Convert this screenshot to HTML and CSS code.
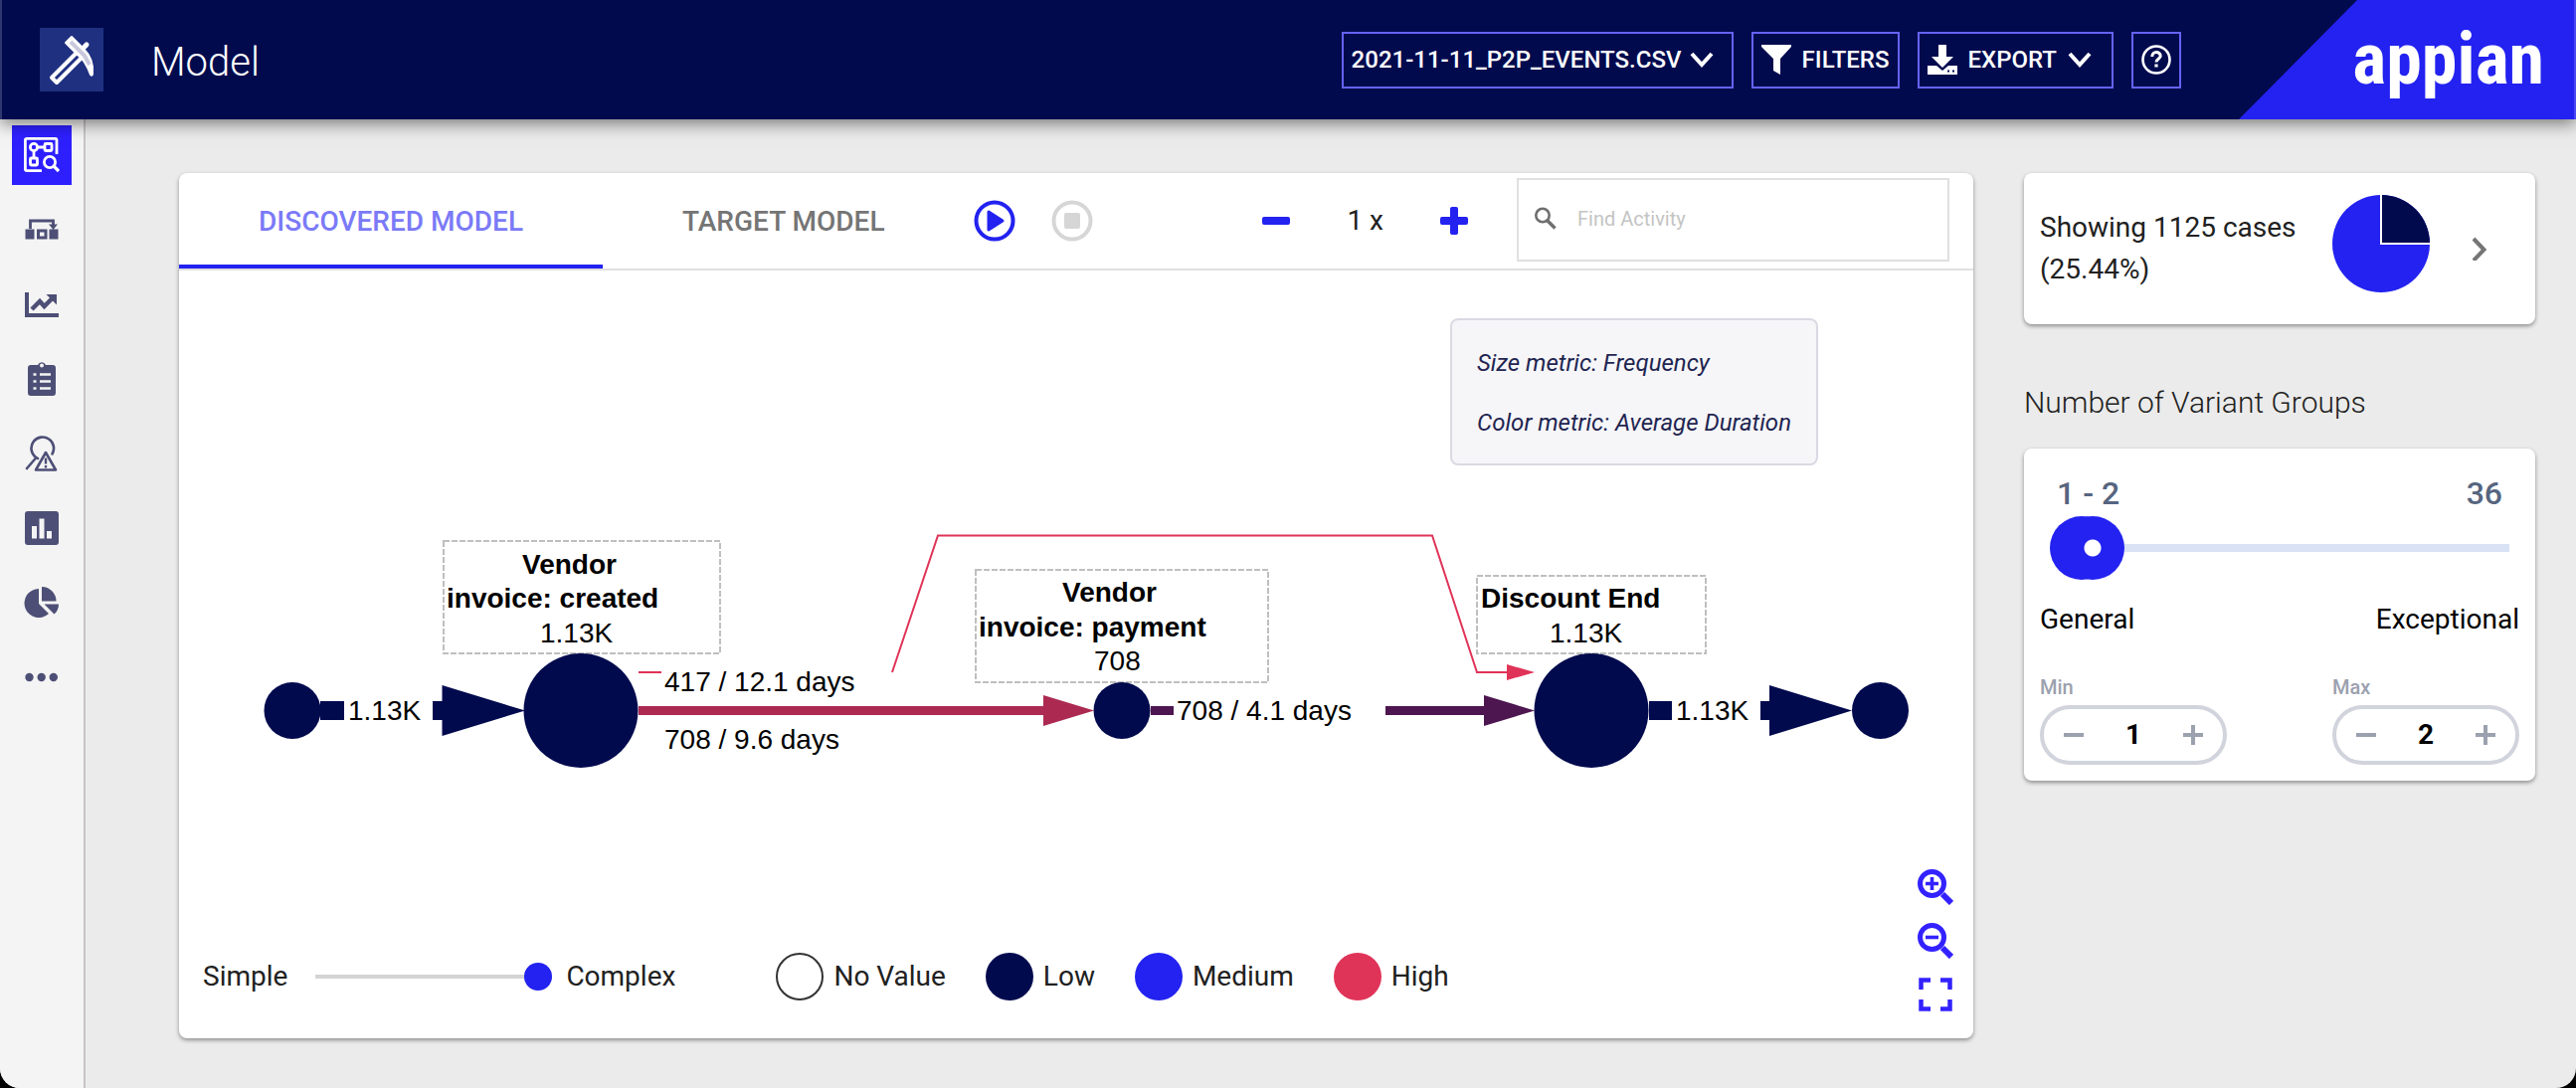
FILE: index.html
```html
<!DOCTYPE html>
<html lang="en">
<head>
<meta charset="utf-8">
<meta name="viewport" content="width=device-width, initial-scale=1">
<title>Model</title>
<link rel="stylesheet" href="styles.css">
</head>
<body>
<header class="topbar">
  <svg class="app-icon" viewBox="0 0 64 64" aria-hidden="true">
    <rect width="64" height="64" fill="#1f3080"/>
    <path d="M38 24L12 50l5 5 26-26z" fill="#1f3080" stroke="#fff" stroke-width="4" stroke-linejoin="round"/>
    <path d="M42 22l5-5" stroke="#fff" stroke-width="5" stroke-linecap="round"/>
    <path d="M32 9l-6 6 13 13c6 4 9 11 12 19 1 1 2 1 2-1 1-11-2-18-9-25z" fill="#fff" stroke="#fff" stroke-width="2" stroke-linejoin="round"/>
    <path d="M31 14l14 14 5 9" fill="none" stroke="#c9c8dc" stroke-width="4"/>
  </svg>
  <h1 class="page-title">Model</h1>
  <div class="actions">
    <div class="picker">
      <select class="picker-select outlined" aria-label="Dataset"><option>2021-11-11_P2P_EVENTS.CSV</option></select>
      <svg class="chevron" viewBox="0 0 24 24"><path d="M2 6l10 11L22 6" fill="none" stroke="#fff" stroke-width="4"/></svg>
    </div>
    <button class="outlined" type="button">
      <svg class="icon-30" viewBox="0 0 30 30"><path d="M0 0h30v2L19 14v16l-7-4V14L0 2z" fill="#fff"/></svg>
      FILTERS
    </button>
    <button class="outlined export" type="button">
      <svg class="icon-30" viewBox="0 0 30 30"><path d="M11 0h8v12h7L15 23 4 12h7z" fill="#fff"/><path fill-rule="evenodd" d="M0 21h9l6 5 6-5h9v9H0zM20 25.500v2h2v-2zM25 25.500v2h2v-2z" fill="#fff"/></svg>
      EXPORT
      <svg class="chevron" viewBox="0 0 24 24"><path d="M2 6l10 11L22 6" fill="none" stroke="#fff" stroke-width="4"/></svg>
    </button>
    <button class="outlined help" type="button" aria-label="Help">
      <svg class="icon-30" viewBox="0 0 30 30" fill="none" stroke="#fff"><circle cx="15" cy="15" r="13.500" stroke-width="2.600"/><path d="M10.800 12c0-6 8.400-5.500 8.400-.7 0 3-4.200 3-4.200 6.200" stroke-width="3"/><path d="M15 19.500v3" stroke-width="3.200"/></svg>
    </button>
  </div>
  <div class="brand"><span class="brand-name">appian</span></div>
</header>

<div class="shell">
  <nav class="rail" aria-label="Sections">
    <a class="rail-link active" href="#model" aria-label="Model">
      <svg viewBox="0 0 36 36" fill="none" stroke="#fff" stroke-width="2.800"><path d="M33 17V2.500Q33 1.400 32 1.400H3Q1.400 1.400 1.400 3v29q0 1.600 1.600 1.600h15"/><circle cx="10" cy="10" r="3.600"/><rect x="21" y="6.500" width="7" height="7" rx="1"/><rect x="6.500" y="21" width="7" height="7" rx="1"/><path d="M14 10h7M10 14v7"/><circle cx="26" cy="25" r="5.600"/><path d="M30 29l5 5" stroke-width="3.200"/></svg>
    </a>
    <a class="rail-link" href="#flow" aria-label="Flow">
      <svg viewBox="0 0 36 36"><path d="M6.500 17V9h23v5" fill="none" stroke="#4d4f76" stroke-width="2.800"/><path d="M25 12.500h9L29.500 18zM1.500 17.500h9v10H1.500zM25.500 17.500h9v10h-9z"/><path d="M14.500 19h7.500v7h-7.500z" fill="none" stroke="#4d4f76" stroke-width="3"/></svg>
    </a>
    <a class="rail-link" href="#trends" aria-label="Trends">
      <svg viewBox="0 0 36 36" fill="none" stroke="#4d4f76"><path d="M3 6v23h32" stroke-width="4"/><path d="M8 23l8-8 4.500 5 9-9" stroke-width="4.500"/><path d="M22.500 8H33v10.500z" fill="#4d4f76" stroke="none"/></svg>
    </a>
    <a class="rail-link" href="#tasks" aria-label="Tasks">
      <svg viewBox="0 0 36 36"><path fill-rule="evenodd" d="M7 4h7a4.300 4.300 0 0 1 8 0h7q3 0 3 3v25q0 3-3 3H7q-3 0-3-3V7q0-3 3-3zM18 2.500a2 2 0 1 0 0 4 2 2 0 0 0 0-4z"/><path d="M16 13.500h11M16 20.500h11M16 27.500h11M9.500 13.500h3M9.500 20.500h3M9.500 27.500h3" stroke="#f4f4f4" stroke-width="2.600"/></svg>
    </a>
    <a class="rail-link" href="#issues" aria-label="Root causes">
      <svg viewBox="0 0 36 36" fill="none" stroke="#4d4f76" stroke-width="2.600" stroke-linejoin="round"><path d="M28.500 18.500A11.300 11.300 0 1 0 11 21l3 2M12.500 22L3 33" stroke-linecap="round"/><path d="M22 17L12 34.500h20z"/><path d="M22 22.500v6M22 30v2.500" stroke-width="2.400"/></svg>
    </a>
    <a class="rail-link" href="#charts" aria-label="Charts">
      <svg viewBox="0 0 36 36"><path fill-rule="evenodd" d="M4 1h28q3 0 3 3v28q0 3-3 3H4q-3 0-3-3V4q0-3 3-3zM8 16v12.500h5V16zM15.500 8.500v20h5v-20zM23 21v7.500h5V21z"/></svg>
    </a>
    <a class="rail-link" href="#breakdown" aria-label="Breakdown">
      <svg viewBox="0 0 36 36"><path d="M15 4v15l10 10A14.500 14.500 0 1 1 15 4zM18 2a14.500 14.500 0 0 1 14.500 14.500H18zM20.500 19.500H35c0 4-1.500 7.500-4.500 10z"/></svg>
    </a>
    <a class="rail-link" href="#more" aria-label="More">
      <svg viewBox="0 0 36 36"><circle cx="5.500" cy="18" r="4.200"/><circle cx="17.700" cy="18" r="4.200"/><circle cx="29.800" cy="18" r="4.200"/></svg>
    </a>
  </nav>

  <main class="content">
    <section class="card model" aria-label="Process model">
      <div class="toolbar">
        <div class="tabs" role="tablist">
          <button class="tab selected" type="button" role="tab" aria-selected="true">DISCOVERED MODEL</button>
          <button class="tab" type="button" role="tab" aria-selected="false">TARGET MODEL</button>
        </div>
        <div class="playback">
          <button class="plain" type="button" aria-label="Play"><svg class="icon-42" viewBox="0 0 42 42"><circle cx="21" cy="21" r="18.500" fill="none" stroke="#2322f0" stroke-width="4"/><path d="M15 12l14 9-14 9z" fill="#2322f0" stroke="#2322f0" stroke-width="3" stroke-linejoin="round"/></svg></button>
          <button class="plain" type="button" aria-label="Stop" disabled><svg class="icon-42" viewBox="0 0 42 42"><circle cx="21" cy="21" r="18.500" fill="none" stroke="#d6d6d6" stroke-width="4"/><rect x="13" y="13" width="16" height="16" rx="2" fill="#d6d6d6"/></svg></button>
        </div>
        <div class="speed">
          <button class="plain" type="button" aria-label="Slower"><svg class="icon-28" viewBox="0 0 28 28"><rect y="10" width="28" height="8" rx="2" fill="#2322f0"/></svg></button>
          <span>1 x</span>
          <button class="plain" type="button" aria-label="Faster"><svg class="icon-28" viewBox="0 0 28 28" fill="#2322f0"><rect y="10" width="28" height="8" rx="2"/><rect x="10" width="8" height="28" rx="2"/></svg></button>
        </div>
        <label class="search">
          <svg class="icon-24" viewBox="0 0 24 24" fill="none" stroke="#6f6f6f"><circle cx="9" cy="8.500" r="6.700" stroke-width="2.600"/><path d="M13.500 13.500l8 8" stroke-width="3.400"/></svg>
          <input class="search-input" type="text" placeholder="Find Activity" aria-label="Find Activity">
        </label>
      </div>

      <div class="metrics">
        <p>Size metric: Frequency</p>
        <p>Color metric: Average Duration</p>
      </div>

      <svg class="graph" viewBox="0 0 1804 320" role="img" aria-label="Process graph">
        <g class="frame">
          <rect x="266" y="44" width="278" height="113"/>
          <rect x="801" y="73" width="294" height="113"/>
          <rect x="1305" y="79" width="230" height="78"/>
        </g>
        <g fill="#020a4e">
          <circle cx="114" cy="214.500" r="28.500"/>
          <circle cx="404" cy="214.500" r="57.500"/>
          <circle cx="948" cy="214.500" r="28.500"/>
          <circle cx="1420" cy="214.500" r="57.500"/>
          <circle cx="1710.500" cy="214.500" r="28.500"/>
          <path d="M142 205h24v19h-24zM255 205h9.500v-16L348 214.500 264.500 240v-16H255z"/>
          <path d="M1478 205h23v19h-23zM1590 205h9v-16l83 25.500-83 25.500v-16h-9z"/>
        </g>
        <path d="M462 210h407v-11l51 15.500-51 15.500v-11H462z" fill="#ac2a52"/>
        <path d="M977 210h23v9h-23zM1213 210h99v-11l51 15.500-51 15.500v-11h-99z" fill="#4d1650"/>
        <path d="M462 176h23M717 176l46-137.500h497L1305 176h32" fill="none" stroke="#e03358" stroke-width="2"/>
        <path d="M1335 168l28 8-28 8z" fill="#e03358"/>
        <g class="node-name">
          <text x="345" y="77">Vendor</text>
          <text x="269" y="111">invoice: created</text>
          <text x="888" y="105">Vendor</text>
          <text x="804" y="140">invoice: payment</text>
          <text x="1309" y="111">Discount End</text>
        </g>
        <g class="node-value">
          <text x="363" y="146">1.13K</text>
          <text x="920" y="174">708</text>
          <text x="1378" y="146">1.13K</text>
          <text x="170" y="224">1.13K</text>
          <text x="488" y="195">417 / 12.1 days</text>
          <text x="488" y="253">708 / 9.6 days</text>
          <text x="1003" y="224">708 / 4.1 days</text>
          <text x="1505" y="224">1.13K</text>
        </g>
      </svg>

      <div class="card-footer">
        <div class="complexity">
          <label for="complexity">Simple</label>
          <input class="detail-range" id="complexity" type="range" min="0" max="100" value="100">
          <span>Complex</span>
        </div>
        <ul class="legend">
          <li><i class="dot none"></i>No Value</li>
          <li><i class="dot low"></i>Low</li>
          <li><i class="dot medium"></i>Medium</li>
          <li><i class="dot high"></i>High</li>
        </ul>
        <div class="zoom">
          <button class="plain" type="button" aria-label="Zoom in"><svg class="icon-36" viewBox="0 0 36 36" fill="none" stroke="#3322ff"><circle cx="14.500" cy="14.500" r="12" stroke-width="5"/><path d="M25 25l9 9" stroke-width="6"/><path d="M8 14.500h13M14.500 8v13" stroke-width="3.600"/></svg></button>
          <button class="plain" type="button" aria-label="Zoom out"><svg class="icon-36" viewBox="0 0 36 36" fill="none" stroke="#3322ff"><circle cx="14.500" cy="14.500" r="12" stroke-width="5"/><path d="M25 25l9 9" stroke-width="6"/><path d="M8 14.500h13" stroke-width="3.600"/></svg></button>
          <button class="plain" type="button" aria-label="Full screen"><svg class="icon-36" viewBox="0 0 36 36" fill="none" stroke="#3322ff" stroke-width="4.500"><path d="M3.500 13V3.500H13M23 3.500h9.500V13M32.500 23v9.500H23M13 32.500H3.500V23"/></svg></button>
        </div>
      </div>
    </section>

    <aside class="side">
      <section class="card cases">
        <p class="cases-text">Showing 1125 cases (25.44%)</p>
        <svg class="pie" viewBox="0 0 98 98" aria-hidden="true"><circle cx="49" cy="49" r="49" fill="#2322f0"/><path d="M49 49V0a49 49 0 0 1 49 49z" fill="#020a4e"/><path d="M49 0v49h49" fill="none" stroke="#fff" stroke-width="2"/></svg>
        <button class="plain cases-open" type="button" aria-label="Open cases"><svg class="icon-24" viewBox="0 0 24 24"><path d="M6 2l10.500 11L6 24" fill="none" stroke="#757575" stroke-width="4"/></svg></button>
      </section>
      <h2 class="side-title">Number of Variant Groups</h2>
      <section class="card variants">
        <div class="bounds"><span>1 - 2</span><span>36</span></div>
        <div class="dual-range">
          <input class="range lower" type="range" min="1" max="36" value="1" aria-label="Lowest group">
          <input class="range upper" type="range" min="1" max="36" value="2" aria-label="Highest group">
        </div>
        <div class="ends"><span>General</span><span>Exceptional</span></div>
        <div class="steppers">
          <div class="field">
            <label for="min">Min</label>
            <div class="stepper">
              <button class="plain" type="button" aria-label="Decrease minimum"><svg class="icon-20" viewBox="0 0 20 20"><path d="M0 10h20" stroke="#9ba1ae" stroke-width="4"/></svg></button>
              <input class="stepper-value" id="min" type="text" inputmode="numeric" value="1">
              <button class="plain" type="button" aria-label="Increase minimum"><svg class="icon-20" viewBox="0 0 20 20"><path d="M0 10h20M10 0v20" stroke="#9ba1ae" stroke-width="4"/></svg></button>
            </div>
          </div>
          <div class="field">
            <label for="max">Max</label>
            <div class="stepper">
              <button class="plain" type="button" aria-label="Decrease maximum"><svg class="icon-20" viewBox="0 0 20 20"><path d="M0 10h20" stroke="#9ba1ae" stroke-width="4"/></svg></button>
              <input class="stepper-value" id="max" type="text" inputmode="numeric" value="2">
              <button class="plain" type="button" aria-label="Increase maximum"><svg class="icon-20" viewBox="0 0 20 20"><path d="M0 10h20M10 0v20" stroke="#9ba1ae" stroke-width="4"/></svg></button>
            </div>
          </div>
        </div>
      </section>
    </aside>
  </main>
</div>
</body>
</html>
```
FILE: styles.css
```css
:root {
  --navy: #020a4e;
  --blue: #2322f0;
  --red: #e03358;
  --page: #ebebeb;
}

* { box-sizing: border-box; }

html { background: #000; }

body {
  margin: 0;
  min-height: 100vh;
  display: flex;
  flex-direction: column;
  overflow: hidden;
  border-radius: 0 0 20px 20px;
  background: var(--page);
  color: #212121;
  font: 400 28px/32px Roboto, "Liberation Sans", sans-serif;
}

h1, h2, p, ul { margin: 0; padding: 0; }
ul { list-style: none; }
svg { display: block; flex: none; }
button, input, select { font: inherit; color: inherit; }

.plain {
  display: block;
  padding: 0;
  border: 0;
  background: none;
}

.icon-20 { width: 20px; height: 20px; }
.icon-24, .chevron { width: 24px; height: 24px; }
.icon-28 { width: 28px; height: 28px; }
.icon-30 { width: 30px; height: 30px; }
.icon-36 { width: 36px; height: 36px; }
.icon-42 { width: 42px; height: 42px; }

/* Header */
.topbar {
  position: relative;
  z-index: 1;
  display: flex;
  align-items: center;
  height: 120px;
  padding-left: 38px;
  border-left: 2px solid #2f3670;
  border-right: 2px solid #4a49f3;
  background: var(--navy);
  color: #fff;
  box-shadow: 0 4px 16px rgba(0, 0, 0, .5);
}
.app-icon { width: 64px; height: 64px; }
.page-title {
  margin-left: 48px;
  padding-top: 5px;
  font-size: 40px;
  line-height: 48px;
  font-weight: 300;
}
.actions {
  display: flex;
  gap: 18px;
  margin-left: auto;
}
.picker { display: grid; align-items: center; }
.picker > * { grid-area: 1 / 1; }
.picker .chevron { justify-self: end; margin-right: 20px; pointer-events: none; }
.outlined {
  display: flex;
  align-items: center;
  gap: 11px;
  height: 57px;
  padding: 0 8px;
  border: 2px solid #6463f5;
  border-radius: 0;
  background: transparent;
  font-size: 24px;
  font-weight: 500;
}
.picker-select { appearance: none; padding-right: 50px; }
.export { padding-right: 20px; }
.brand {
  display: flex;
  align-items: center;
  justify-content: flex-end;
  width: 337px;
  height: 120px;
  margin-left: 58px;
  padding-right: 30px;
  background: var(--blue);
  clip-path: polygon(119px 0, 100% 0, 100% 100%, 0 100%);
}
.brand-name {
  font: 700 72px/104px "Liberation Sans Narrow", "Roboto Condensed", "Liberation Sans", sans-serif;
}

/* Navigation rail */
.shell { display: flex; flex: 1; }
.rail {
  display: flex;
  flex-direction: column;
  gap: 15px;
  width: 86px;
  padding: 6px 12px;
  border-right: 2px solid #c8c4c4;
  background: #f4f4f4;
}
.rail-link {
  display: grid;
  place-items: center;
  height: 60px;
  fill: #4d4f76;
}
.rail-link svg { width: 36px; height: 36px; }
.rail-link.active { background: #2e1fff; }

/* Content */
.content {
  flex: 1;
  display: grid;
  grid-template-columns: minmax(0, 1fr) 514px;
  gap: 51px;
  padding: 54px 41px 50px 94px;
}
.card {
  border-radius: 8px;
  background: #fff;
  box-shadow: 0 2px 4px rgba(0, 0, 0, .4);
}
.model { display: flex; flex-direction: column; }
.toolbar {
  display: flex;
  align-items: center;
  height: 98px;
  padding-right: 24px;
  border-bottom: 2px solid #e0e0e0;
}
.tabs { display: flex; align-self: stretch; }
.tab {
  padding: 6px 80px 0;
  border: 0;
  border-bottom: 4px solid transparent;
  background: none;
  color: #757575;
  font-weight: 500;
  white-space: nowrap;
}
.tab.selected { border-color: var(--blue); color: #7b7af7; }
.playback { display: flex; gap: 36px; margin-left: 9px; }
.speed {
  display: flex;
  align-items: center;
  gap: 57px;
  margin-left: auto;
}
.search {
  display: flex;
  align-items: center;
  gap: 20px;
  width: 435px;
  height: 84px;
  margin-left: 49px;
  margin-bottom: 2px;
  padding: 0 15px 2px;
  border: 2px solid #e0e0e0;
}
.search-input {
  flex: 1;
  min-width: 0;
  padding: 0;
  border: 0;
  background: none;
  font-size: 20px;
}
.search-input::placeholder { color: #c4c4c4; opacity: 1; }

.metrics {
  display: grid;
  gap: 28px;
  align-self: flex-end;
  margin: 48px 156px 32px 0;
  padding: 27px 25px 25px;
  border: 2px solid #dadae4;
  border-radius: 8px;
  background: #f6f6f9;
  color: #1f2550;
  font-size: 24px;
  font-style: italic;
}

.graph { width: 100%; height: auto; }
.frame { fill: none; stroke: #bfbfbf; stroke-width: 2; stroke-dasharray: 6 2; }
.node-name, .node-value {
  fill: #000;
  font: 400 28px "Liberation Sans", Arial, sans-serif;
}
.node-name { font-weight: 700; }

.card-footer {
  display: flex;
  align-items: flex-end;
  margin-top: auto;
  padding: 0 20px 26px 24px;
}
.complexity, .legend { display: flex; align-items: center; height: 48px; margin-bottom: 12px; }
.complexity { gap: 14px; }
.detail-range {
  appearance: none;
  width: 252px;
  height: 28px;
  margin: 0;
  padding-left: 14px;
  background: none;
}
.detail-range::-webkit-slider-runnable-track {
  height: 28px;
  background: linear-gradient(#d4d4d4, #d4d4d4) center / 100% 4px no-repeat;
}
.detail-range::-webkit-slider-thumb {
  appearance: none;
  width: 28px;
  height: 28px;
  border-radius: 50%;
  background: var(--blue);
}
.legend { gap: 40px; margin-left: 101px; }
.legend li { display: flex; align-items: center; gap: 10px; }
.dot { width: 48px; height: 48px; border-radius: 50%; }
.none { border: 2px solid #333; }
.low { background: var(--navy); }
.medium { background: var(--blue); }
.high { background: var(--red); }
.zoom { display: grid; gap: 18px; margin-left: auto; }

/* Side column */
.cases {
  display: flex;
  align-items: center;
  height: 152px;
  padding: 0 44px 0 16px;
}
.cases-text { flex: 1; line-height: 42px; }
.pie { width: 98px; height: 98px; margin: 0 38px 10px 24px; }
.side-title {
  margin: 63px 0 30px;
  font-size: 30px;
  line-height: 32px;
  font-weight: 300;
}
.variants { padding: 25px 16px 16px; }
.bounds, .ends, .steppers { display: flex; justify-content: space-between; }
.bounds {
  padding: 0 17px;
  color: #56657f;
  font-size: 32px;
  line-height: 40px;
  font-weight: 500;
}
.dual-range { display: grid; margin: 3px 10px 0; }
.range {
  grid-area: 1 / 1;
  appearance: none;
  width: 100%;
  height: 64px;
  margin: 0;
  background: none;
  pointer-events: none;
}
.lower::-webkit-slider-runnable-track {
  height: 64px;
  border-radius: 4px;
  background: linear-gradient(#d8e2f4, #d8e2f4) center / 100% 8px no-repeat;
}
.range::-webkit-slider-thumb {
  appearance: none;
  width: 64px;
  height: 64px;
  border-radius: 50%;
  background: var(--blue);
  pointer-events: auto;
}
.upper::-webkit-slider-thumb {
  background: radial-gradient(circle, #fff 8px, var(--blue) 9px);
}
.ends { margin-top: 24px; color: #000; }
.steppers { margin-top: 40px; }
.field label {
  display: block;
  margin-bottom: 6px;
  color: #9ba1ae;
  font-size: 20px;
  line-height: 24px;
  font-weight: 500;
}
.stepper {
  display: flex;
  align-items: center;
  justify-content: space-between;
  width: 188px;
  height: 60px;
  padding: 0 20px;
  border: 4px solid #d1d4dc;
  border-radius: 30px;
}
.stepper-value {
  width: 60px;
  padding: 0;
  border: 0;
  background: none;
  color: #000;
  font-weight: 700;
  text-align: center;
}
```
